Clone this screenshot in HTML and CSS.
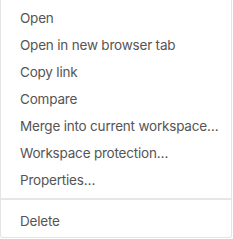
FILE: index.html
```html
<!DOCTYPE html>
<html>
<head>
<meta charset="utf-8">
<link rel="stylesheet" href="styles.css">
</head>
<body>
<div class="menu">
  <ul class="group">
    <li class="item">Open</li>
    <li class="item">Open in new browser tab</li>
    <li class="item">Copy link</li>
    <li class="item">Compare</li>
    <li class="item">Merge into current workspace…</li>
    <li class="item">Workspace protection…</li>
    <li class="item">Properties…</li>
  </ul>
  <div class="sep"></div>
  <ul class="group">
    <li class="item">Delete</li>
  </ul>
</div>
</body>
</html>
```
FILE: styles.css
```css
html, body {
  margin: 0;
  padding: 0;
  background: #ffffff;
}
.menu {
  width: 232px;
  height: 238px;
  box-sizing: border-box;
  border: 1px solid #e4e4e4;
  border-top: none;
  border-radius: 0 0 3px 3px;
  background: #fff;
  padding-top: 5px;
  display: flex;
  flex-direction: column;
  font-family: "Inter", "Noto Sans", sans-serif;
  font-size: 13.5px;
  letter-spacing: -0.2px;
  color: #555555;
}
.group {
  list-style: none;
  margin: 0;
  padding: 0;
}
.item {
  height: 27px;
  line-height: 27px;
  padding-left: 19px;
  white-space: nowrap;
}
.sep {
  height: 2px;
  background: #e6e6e6;
  margin: 4px 0 8px;
}
```
